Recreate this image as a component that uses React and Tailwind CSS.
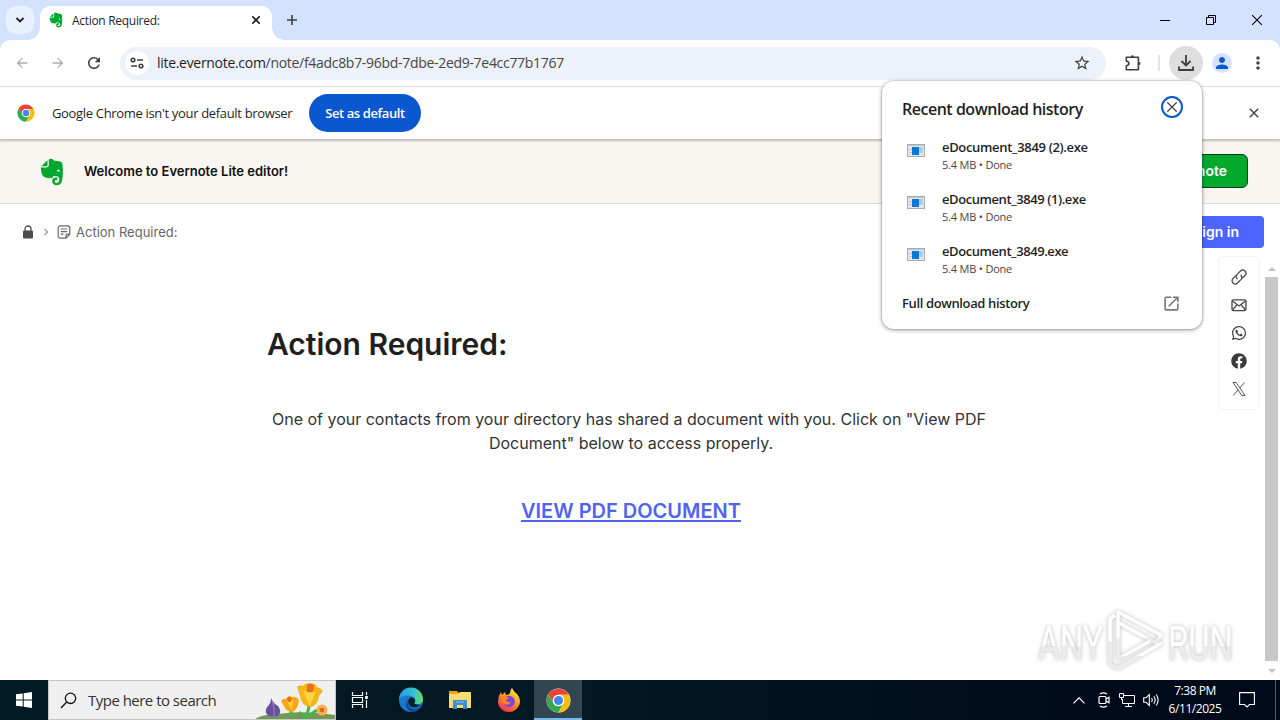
import { FaWhatsapp, FaFacebook } from "react-icons/fa";
import { MdArrowBack, MdArrowForward, MdRefresh, MdStarBorder, MdPerson, MdMoreVert, MdOpenInNew, MdClose } from "react-icons/md";

const downloads = [
   { name: "eDocument_3849 (2).exe", width: "tracking-[-0.33px]" },
   { name: "eDocument_3849 (1).exe", width: "tracking-[-0.42px]" },
   { name: "eDocument_3849.exe", width: "tracking-[-0.43px]" },
];

function EvernoteLogo({ className }) {
   return (
      <svg className={className} viewBox="0 0 24 28">
         <path d="M7.5 2.2L1.4 8.2H6Q7.5 8.2 7.5 6.7Z" fill="#00a82d" />
         <path d="M8.8 2Q9 0.8 11 0.8Q13.2 0.8 13.8 2.4L20.3 3.6Q22.2 4 22.5 6.5Q23.3 12 22.7 18Q22.2 23.5 21 25.3Q19.6 27.2 16.6 27.2Q12.2 27.2 12.2 22.8Q12.2 19.4 16 19.4H17.3V22.1H16.2Q14.7 22.1 14.7 23.3Q14.7 25 16.5 25Q19.3 25 19.3 21.3Q19.3 18.6 16.6 18.3L13.4 17.9Q12.8 20.3 10 20.2Q5.5 20 3.5 18.5Q1.5 16.5 0.8 10.5Q0.8 9.6 1.5 9.5H6.2Q8.8 9.5 8.8 6.8Z" fill="#00a82d" />
         <path d="M16.8 13.3Q17 11.4 18.4 11.4Q19.8 11.6 20 13.7Q18.4 13 16.8 13.3Z" fill="#fff" />
      </svg>
   );
}

function ChromeLogo({ size }) {
   return (
      <svg width={size} height={size} viewBox="0 0 48 48">
         <circle cx="24" cy="24" r="23" fill="#fff" />
         <path d="M24 13H43.9A23 23 0 0 0 4.1 12.5L14.5 29.5A11 11 0 0 1 24 13Z" fill="#ea4335" />
         <path d="M33.5 29.5L23.5 47A23 23 0 0 0 43.9 13H24A11 11 0 0 1 33.5 29.5Z" fill="#fbbc04" />
         <path d="M14.5 29.5L4.1 12.5A23 23 0 0 0 23.5 47L33.5 29.5A11 11 0 0 1 14.5 29.5Z" fill="#34a853" />
         <circle cx="24" cy="24" r="11" fill="#fff" />
         <circle cx="24" cy="24" r="8.7" fill="#4285f4" />
      </svg>
   );
}

function TabStrip() {
   return (
      <div className="h-10 bg-[#d3e3fd] flex items-center shrink-0">
         <div className="ml-1.5 size-7 rounded-[10px] bg-[#e9f1fe] flex items-center justify-center">
            <svg width="10" height="8" viewBox="0 0 10 8" fill="none" stroke="#1f1f1f" strokeWidth="1.8">
               <path d="M1.5 2L5 5.5L8.5 2" />
            </svg>
         </div>
         <div className="relative ml-1.5 mt-1.5 h-[34px] w-[232px] bg-white rounded-t-[10px] flex items-center pb-1.5">
            <div className="absolute bottom-0 -left-3 size-3 bg-[radial-gradient(circle_at_0_0,transparent_11.5px,white_12px)]" />
            <div className="absolute bottom-0 -right-3 size-3 bg-[radial-gradient(circle_at_100%_0,transparent_11.5px,white_12px)]" />
            <EvernoteLogo className="ml-2 w-4 h-4" />
            <span className="ml-2 pt-0.5 flex-1 text-[12px] tracking-[-0.3px] text-[#1f1f1f] whitespace-nowrap">Action Required:</span>
            <svg className="mr-3" width="8" height="8" viewBox="0 0 8 8" stroke="#1f1f1f" strokeWidth="1.6">
               <path d="M0.3 0.3L7.7 7.7M7.7 0.3L0.3 7.7" />
            </svg>
         </div>
         <svg className="ml-[15px]" width="10" height="10" viewBox="0 0 10 10" stroke="#3c4043" strokeWidth="1.6">
            <path d="M5 0V10M0 5H10" />
         </svg>
         <div className="ml-auto flex text-black">
            <div className="w-[46px] h-10 flex items-center justify-center"><div className="w-2.5 h-px bg-black" /></div>
            <div className="w-[46px] h-10 flex items-center justify-center">
               <svg width="10" height="10" viewBox="0 0 10 10" fill="none" stroke="#000">
                  <path d="M0.5 2.5H7.5V9.5H0.5ZM2.5 2.5V0.5H9.5V7.5H7.5" />
               </svg>
            </div>
            <div className="w-[46px] h-10 flex items-center justify-center">
               <svg width="10" height="10" viewBox="0 0 10 10" stroke="#000" strokeWidth="1.1"><path d="M0 0L10 10M10 0L0 10" /></svg>
            </div>
         </div>
      </div>
   );
}

function Toolbar() {
   return (
      <div className="bg-[#d3e3fd] shrink-0">
         <div className="h-[47px] bg-white rounded-t-[10px] border-b border-[#dfe1e5] flex items-center pl-1">
            <div className="w-9 flex justify-center"><MdArrowBack className="size-4 text-[#adadad]" /></div>
            <div className="w-9 flex justify-center"><MdArrowForward className="size-4 text-[#adadad]" /></div>
            <div className="w-9 flex justify-center"><MdRefresh className="size-[18px] text-[#3c4043]" /></div>
            <div className="ml-2 w-[986px] h-[33px] rounded-full bg-[#edf1fa] flex items-center pl-[5px] pr-4">
               <div className="size-6 rounded-full bg-white flex items-center justify-center">
                  <svg width="14" height="12" viewBox="0 0 14 12" fill="none" stroke="#3c4043" strokeWidth="1.6">
                     <circle cx="3" cy="3" r="1.8" />
                     <path d="M7 3H13M1 9H7" />
                     <circle cx="11" cy="9" r="1.8" />
                  </svg>
               </div>
               <span className="ml-2 pb-0.5 flex-1 text-[14px] tracking-[-0.3px] text-[#474747] whitespace-nowrap">
                  <span className="text-[#1f1f1f]">lite.evernote.com</span>/note/f4adc8b7-96bd-7dbe-2ed9-7e4cc77b1767
               </span>
               <MdStarBorder className="size-[18px] text-[#3c4043] mr-[-1px]" />
            </div>
            <div className="ml-2 w-9 flex justify-center">
               <svg className="ml-0.5" width="18" height="18" viewBox="0 0 18 18" fill="#3c4043">
                  <path d="M2.3 3.3H14.4V15.7H2.3V11.8C5.8 11 5.8 7.8 2.3 7Z" fill="none" stroke="#3c4043" strokeWidth="1.6" strokeLinejoin="round" />
                  <path d="M6.7 3A1.7 1.7 0 0 1 10.1 3ZM14.8 7.7A1.7 1.7 0 0 1 14.8 11.1Z" />
               </svg>
            </div>
            <div className="ml-2 w-0.5 h-4 bg-[#dfe5f5]" />
            <div className="ml-[9px] size-[34px] rounded-full bg-[#dedede] flex items-center justify-center">
               <svg width="18" height="18" viewBox="0 0 18 18" fill="none" stroke="#3c4043" strokeWidth="1.8">
                  <path d="M9 1V11M4.5 7L9 11.5L13.5 7M2 12.5V16H16V12.5" />
               </svg>
            </div>
            <div className="ml-[9px] size-5 rounded-full bg-[#d3e3fd] flex items-center justify-center">
               <MdPerson className="size-[18px] text-[#0b57d0]" />
            </div>
            <div className="ml-2 w-9 flex justify-center"><MdMoreVert className="size-5 text-[#3c4043]" /></div>
         </div>
      </div>
   );
}

function InfoBar() {
   return (
      <div className="relative z-[1] h-[53px] bg-white border-b border-[#c4c4c4] shadow-[0_1px_2px_rgba(0,0,0,0.25)] flex items-center pl-[17px] pr-5 shrink-0">
         <ChromeLogo size={18} />
         <span className="ml-[17px] pt-0.5 w-[257px] text-[13px] tracking-[-0.33px] text-[#1f1f1f] whitespace-nowrap">Google Chrome isn't your default browser</span>
         <div className="w-28 h-[38px] pt-0.5 rounded-full bg-[#0b57d0] text-white text-[13px] font-semibold tracking-[-0.4px] flex items-center justify-center">Set as default</div>
         <MdClose className="ml-auto size-4 text-[#3c4043] mr-[-2px]" />
      </div>
   );
}

function Banner() {
   return (
      <div className="h-16 bg-[#f9f5f1] border-b border-[#d9d9d9] flex items-center pl-10 pr-8 font-['Inter',sans-serif] shrink-0">
         <EvernoteLogo className="w-6 h-7" />
         <span className="ml-5 text-[13px] font-semibold text-[#111]">Welcome to Evernote Lite editor!</span>
         <div className="ml-auto h-[34px] mb-px px-5 rounded-md border border-[#0a3d17] bg-[#00a82d] text-white text-sm font-semibold flex items-center">Get Evernote</div>
      </div>
   );
}

function ShareBar() {
   return (
      <div className="w-[42px] h-[154px] bg-white rounded-md border border-[#f2f4f5] flex flex-col items-center justify-center gap-3 text-[#3a3a3a]">
         <svg width="16" height="16" viewBox="0 0 24 24" fill="none" stroke="#444" strokeWidth="1.9" strokeLinecap="round">
            <path d="M9.2 14.8A5 5 0 0 1 9.2 8L14.2 3A4.8 4.8 0 0 1 21 9.8L17.5 13.3" />
            <path d="M14.8 9.2A5 5 0 0 1 14.8 16L9.8 21A4.8 4.8 0 0 1 3 14.2L6.5 10.7" />
         </svg>
         <svg width="16" height="16" viewBox="0 0 16 16" fill="none" stroke="#444" strokeWidth="1.3">
            <rect x="1" y="2.8" width="14" height="10.8" rx="1.5" />
            <path d="M1.5 4L8 9L14.5 4M1.5 13L6 7.7M14.5 13L10 7.7" />
         </svg>
         <FaWhatsapp className="size-4" />
         <FaFacebook className="size-4" />
         <svg width="16" height="16" viewBox="0 0 16 16" fill="none" stroke="#444" strokeWidth="0.9">
            <path d="M2 1.5H5.2L14 14.5H10.8ZM13.5 1.5L8.8 6.9M7.2 8.8L2.2 14.5" />
         </svg>
      </div>
   );
}

function Watermark() {
   return (
      <svg className="absolute left-[1030px] top-[605px] drop-shadow-[0_0_2px_rgba(0,0,0,0.27)]" width="240" height="72" viewBox="0 0 240 72" fill="#fff">
         <defs>
            <linearGradient id="mark" x1="0" y1="0" x2="0" y2="1">
               <stop offset="0.54" stopColor="#fff" />
               <stop offset="0.55" stopColor="#ececec" />
            </linearGradient>
         </defs>
         <g fill="url(#mark)" fontFamily="Roboto, sans-serif" fontSize="49">
            <text x="8" y="55" textLength="65" lengthAdjust="spacingAndGlyphs">ANY</text>
            <text x="138" y="55" textLength="65" lengthAdjust="spacingAndGlyphs">RUN</text>
         </g>
         <g fill="none" stroke="url(#mark)" strokeWidth="3.6" strokeLinejoin="round">
            <path d="M80 59V14L85 10" />
            <path d="M88 54V7L131 30L126 38L89 18" />
            <path d="M80 59L88 63L132 38M88 54L120 36" />
         </g>
      </svg>
   );
}

function NotePage() {
   return (
      <div className="flex-1 bg-white flex flex-col font-['Inter',sans-serif] min-h-0">
         <div className="h-14 flex items-center pl-[22px] pr-4 shrink-0">
            <svg width="12" height="14" viewBox="0 0 12 14">
               <path d="M3 6V4A3 3 0 0 1 9 4V6" fill="none" stroke="#4d4d4d" strokeWidth="1.3" />
               <rect x="1" y="5.5" width="10" height="8" rx="1.2" fill="#4d4d4d" />
            </svg>
            <svg className="ml-[9px]" width="6" height="8" viewBox="0 0 6 8" fill="none" stroke="#999" strokeWidth="1.3">
               <path d="M1.5 1L4.5 4L1.5 7" />
            </svg>
            <svg className="ml-2 mr-1.5" width="14" height="14" viewBox="0 0 14 14" fill="none" stroke="#666" strokeWidth="1.2">
               <path d="M3.5 0.8H10.5Q12.8 0.8 12.8 3V9.2L9 13.2H3.5Q1.2 13.2 1.2 11V3Q1.2 0.8 3.5 0.8ZM12.8 9.2H10.5Q9 9.2 9 10.7V13.2M3.7 4H10.3M3.7 6.6H10.3M3.7 9.2H6.5" />
            </svg>
            <span className="text-[13px] text-[#666] -ml-px pt-0.5">Action Required:</span>
            <div className="ml-auto h-8 px-[25px] rounded bg-[#4d64ff] text-white text-sm font-semibold flex items-center">Sign in</div>
         </div>
         <div className="flex flex-1 min-h-0">
            <main className="ml-[267px] w-[728px] pt-16">
               <h1 className="text-[30px] leading-10 font-semibold text-[#1f1f1f] whitespace-nowrap">Action Required:</h1>
               <p className="mt-[43px] text-center text-base leading-6 text-[#333]">
                  <span className="mr-1">One of your contacts from your directory has shared a document with you. Click on "View PDF</span>
                  <br />Document" below to access properly.
               </p>
               <div className="mt-[41px] text-center text-[20px] leading-[30px] font-semibold text-[#5064f0] underline decoration-[1.5px] underline-offset-2">VIEW PDF DOCUMENT</div>
            </main>
            <div className="ml-auto -mt-1"><ShareBar /></div>
            <div className="ml-1 mr-px w-[15px] flex flex-col items-center pt-[7px] pb-[7px]">
               <div className="border-x-4 border-b-4 border-x-transparent border-b-[#c1c1c1] mb-1.5" />
               <div className="w-[13px] flex-1 bg-[#c8c8c8]" />
               <div className="border-x-4 border-t-4 border-x-transparent border-t-[#c1c1c1] mt-2" />
            </div>
         </div>
      </div>
   );
}

function ExeIcon() {
   return (
      <svg width="18" height="14" viewBox="0 0 18 14" shapeRendering="crispEdges">
         <rect x="0.5" y="0.5" width="17" height="12" fill="#e4e8eb" stroke="#a9adb1" />
         <path d="M1 1.5H17" stroke="#bfc5cb" />
         <path d="M2 5.5H5M2 8.5H5M12 5.5H16M12 8.5H16" stroke="#c3cad2" />
         <rect x="5" y="3" width="7" height="8" fill="#0878d7" />
         <rect x="12" y="3" width="4" height="5" fill="#a8cdee" />
      </svg>
   );
}

function DownloadPopup() {
   return (
      <div className="absolute z-10 left-[882px] top-[81px] w-80 h-[248px] rounded-[12px] bg-white shadow-[0_0_0_1px_rgba(0,0,0,0.08),0_1px_4px_rgba(0,0,0,0.4)] flex flex-col text-[#1f1f1f]">
         <div className="flex justify-between pl-5 pr-[19px] pt-[15px] h-[51px]">
            <span className="text-[16px] leading-[27px] font-semibold tracking-[-0.48px] whitespace-nowrap">Recent download history</span>
            <div className="size-[22px] rounded-full border-2 border-[#0b57d0] flex items-center justify-center">
               <svg width="10" height="10" viewBox="0 0 10 10" stroke="#474747" strokeWidth="1.3"><path d="M0.3 0.3L9.7 9.7M9.7 0.3L0.3 9.7" /></svg>
            </div>
         </div>
         {downloads.map((d) => (
            <div key={d.name} className="h-[52px] pl-[25px] flex">
               <div className="w-[35px] pt-3"><ExeIcon /></div>
               <div className="pt-1.5 whitespace-nowrap">
                  <div className={`text-[13px] leading-[18px] font-semibold ${d.width}`}>{d.name}</div>
                  <div className="text-[11px] leading-[17px] tracking-[-0.2px] text-[#474747]">5.4 MB • Done</div>
               </div>
            </div>
         ))}
         <div className="flex items-center justify-between h-8 pl-5 pr-[21px] text-[13px] font-semibold tracking-[-0.37px]">
            Full download history
            <MdOpenInNew className="size-[19px] text-[#777] mb-0.5" />
         </div>
      </div>
   );
}

function Flowers() {
   return (
      <svg className="ml-auto self-end" width="80" height="38" viewBox="0 0 80 38">
         <path d="M0 38Q8 33 24 33Q45 29 80 34V38Z" fill="#6f9a55" />
         <path d="M36 35L36 28M49 37Q54 31 54 24M44 31L49 36M62 29L52 36" stroke="#4caf50" strokeWidth="3" fill="none" />
         <path d="M16 17Q18 22 23 25Q28 32 22 35Q14 37 11 32Q10 27 14 24Q16 21 16 17Z" fill="#65519e" />
         <path d="M17 20Q20 27 19 35" stroke="#8b72bf" strokeWidth="1.6" fill="none" />
         <path d="M26 20Q28 17 31 18Q34 13 37 16Q41 15 44 19Q43 29 37 31Q30 30 29 25Z" fill="#f8a718" />
         <path d="M32 19Q34 25 37 29L38 19Z" fill="#ffd23b" />
         <path d="M42 6Q45 3 48 5Q51 1 55 3Q60 1 62 6Q66 7 68 10L64 15Q63 24 56 26Q46 25 45 15Z" fill="#f5b51b" />
         <path d="M48 9Q51 17 55 25L61 10L55 12Z" fill="#ffd545" />
         <path d="M52 4Q56 0 59 5L58 11H52Z" fill="#e87317" />
         <path d="M32 17Q35 14 37 18L36 21H33Z" fill="#e87317" />
         <circle cx="67" cy="29" r="5.5" fill="#f8b04e" />
         <circle cx="67" cy="29" r="2.3" fill="#df641b" />
      </svg>
   );
}

function EdgeLogo() {
   return (
      <svg width="26" height="26" viewBox="0 0 26 26">
         <defs>
            <linearGradient id="edgeTop" x1="0" y1="0.4" x2="1" y2="0.5">
               <stop stopColor="#219bdc" />
               <stop offset="0.6" stopColor="#35c3d6" />
               <stop offset="1" stopColor="#64dc62" />
            </linearGradient>
         </defs>
         <circle cx="13" cy="13" r="12" fill="#1879cf" />
         <path d="M1 13A12 12 0 0 1 25 12C25.5 17 19 18.5 16 16.5C18 14 17 9 11 8.5C6 8.3 2 10 1 13Z" fill="url(#edgeTop)" />
         <path d="M9.5 14C9 18 12 22 17 22Q20 22 23.4 19A12 12 0 0 1 13 25C7 22 6 15 11 11Q9.8 12.4 9.5 14Z" fill="#124b91" />
         <path d="M16 16.5Q18.5 14 16 11Q13 9 10.8 12Q9 16 12 19Q17 22 23.8 17.5Q20 18.6 16 16.5Z" fill="#08202d" />
      </svg>
   );
}

function FirefoxLogo() {
   return (
      <svg width="24" height="26" viewBox="0 0 24 26">
         <defs>
            <linearGradient id="fox" x1="0.8" y1="0" x2="0.2" y2="1">
               <stop stopColor="#fff04a" />
               <stop offset="0.45" stopColor="#ff9822" />
               <stop offset="1" stopColor="#f02458" />
            </linearGradient>
         </defs>
         <path d="M12 25C5 25 1 20 1 14Q1 9 4 5L5 8L8 5L9 8Q12 8 13 6Q13 3 15 1Q17 5 20 7Q23 10 23 14C23 20 18 25 12 25Z" fill="url(#fox)" />
         <circle cx="12" cy="14.5" r="5.8" fill="#7747d8" />
         <path d="M5 10Q9 8 12 11L9 13Q10 16 14 15Q12 19 7 17Q4 14 5 10Z" fill="#ff822b" />
      </svg>
   );
}

function Taskbar() {
   return (
      <div className="h-10 bg-[linear-gradient(90deg,#001b25_0%,#021722_50%,#000a1b_85%)] flex shrink-0 text-white">
         <div className="w-12 flex items-center justify-center">
            <svg width="16" height="16" viewBox="0 0 16 16" fill="#fff">
               <path d="M0 2.3L6.7 1.4V7.5H0ZM7.7 1.2L16 0V7.5H7.7ZM0 8.5H6.7V14.6L0 13.7ZM7.7 8.5H16V16L7.7 14.8Z" />
            </svg>
         </div>
         <div className="w-72 bg-[#f0f0f0] border border-[#c6c6c6] flex items-center text-[#333]">
            <svg className="ml-[11px]" width="17" height="17" viewBox="0 0 17 17" fill="none" stroke="#111" strokeWidth="1.3">
               <circle cx="10.5" cy="6.3" r="5.2" />
               <path d="M6.7 10L1 16" />
            </svg>
            <span className="ml-[11px] text-[15px] tracking-[-0.52px] whitespace-nowrap">Type here to search</span>
            <Flowers />
         </div>
         <div className="w-12 flex items-center justify-center">
            <svg width="18" height="16" viewBox="0 0 18 16" fill="none" stroke="#fff" strokeWidth="1.2">
               <path d="M1.5 0V3.5H11.5V0M1.5 16V12.5H11.5V16M1.5 5.5H11.5V10.5H1.5ZM15.5 0V3M15.5 8V16" />
               <rect x="14.2" y="4" width="2.6" height="3" fill="#fff" stroke="none" />
            </svg>
         </div>
         <div className="ml-[3px] flex gap-px">
            <div className="w-12 flex items-center justify-center"><EdgeLogo /></div>
            <div className="w-12 flex items-center justify-center">
               <svg width="22" height="20" viewBox="0 0 22 20">
                  <path d="M0 1H8L10 3H22V18H0Z" fill="#e5a51b" />
                  <path d="M0 4H9L11 2H22V18H0Z" fill="#ffdc73" />
                  <path d="M4 19V11Q4 10 5 10H17Q18 10 18 11V19H14V15H8V19Z" fill="#3e91d1" />
                  <path d="M7 12H15" stroke="#84c2ee" />
               </svg>
            </div>
            <div className="w-12 flex items-center justify-center"><FirefoxLogo /></div>
            <div className="w-12 flex items-center justify-center bg-[#324650] border-b-2 border-[#76b9ed] pt-0.5"><ChromeLogo size={25} /></div>
         </div>
         <div className="ml-auto flex items-center">
            <div className="w-6 flex justify-center">
               <svg width="12" height="7" viewBox="0 0 12 7" fill="none" stroke="#fff" strokeWidth="1.2"><path d="M0.5 6.3L6 0.8L11.5 6.3" /></svg>
            </div>
            <div className="w-6 flex justify-center">
               <svg className="ml-px" width="12" height="16" viewBox="0 0 12 16" fill="none" stroke="#fff" strokeWidth="1.2">
                  <rect x="1" y="4.5" width="7" height="7" rx="1" />
                  <path d="M8 7L11 5.2V10.8L8 9M2 2Q5.5 -0.2 9 2M2 14Q5.5 16.2 9 14" />
               </svg>
            </div>
            <div className="w-6 flex justify-center">
               <svg width="16" height="14" viewBox="0 0 16 14" fill="none" stroke="#fff">
                  <path d="M5 2.5H15.5V10.5H3.5V6M9.5 10.5V13M6 13.5H13M0.5 0.5H4.5V4.5H0.5ZM2.5 4.5V7" />
               </svg>
            </div>
            <div className="w-6 flex justify-center">
               <svg width="17" height="14" viewBox="0 0 17 14" fill="none" stroke="#fff" strokeWidth="1.1">
                  <path d="M0.7 4.8H3L6.3 1.5V12.5L3 9.2H0.7ZM8.5 5Q10 7 8.5 9M10.8 3.2Q13.5 7 10.8 10.8M13.2 1.5Q17 7 13.2 12.5" />
               </svg>
            </div>
            <div className="w-16 text-center text-[12px] leading-[18px] tracking-[-0.45px] whitespace-nowrap">
               <div>7:38 PM</div>
               <div>6/11/2025</div>
            </div>
            <div className="w-10 flex justify-center">
               <svg width="16" height="16" viewBox="0 0 16 16" fill="none" stroke="#fff" strokeWidth="1.1">
                  <path d="M0.6 0.6H15.4V12.5H10.5L8 15L5.5 12.5H0.6Z" />
               </svg>
            </div>
            <div className="ml-2 mr-1 w-px h-10 bg-[#53606c]" />
         </div>
      </div>
   );
}

export default function App() {
   return (
      <div className="relative w-[1280px] h-[720px] overflow-hidden flex flex-col bg-white font-['Open_Sans','Noto_Sans',sans-serif]">
         <TabStrip />
         <Toolbar />
         <InfoBar />
         <Banner />
         <NotePage />
         <Taskbar />
         <DownloadPopup />
         <Watermark />
      </div>
   );
}
